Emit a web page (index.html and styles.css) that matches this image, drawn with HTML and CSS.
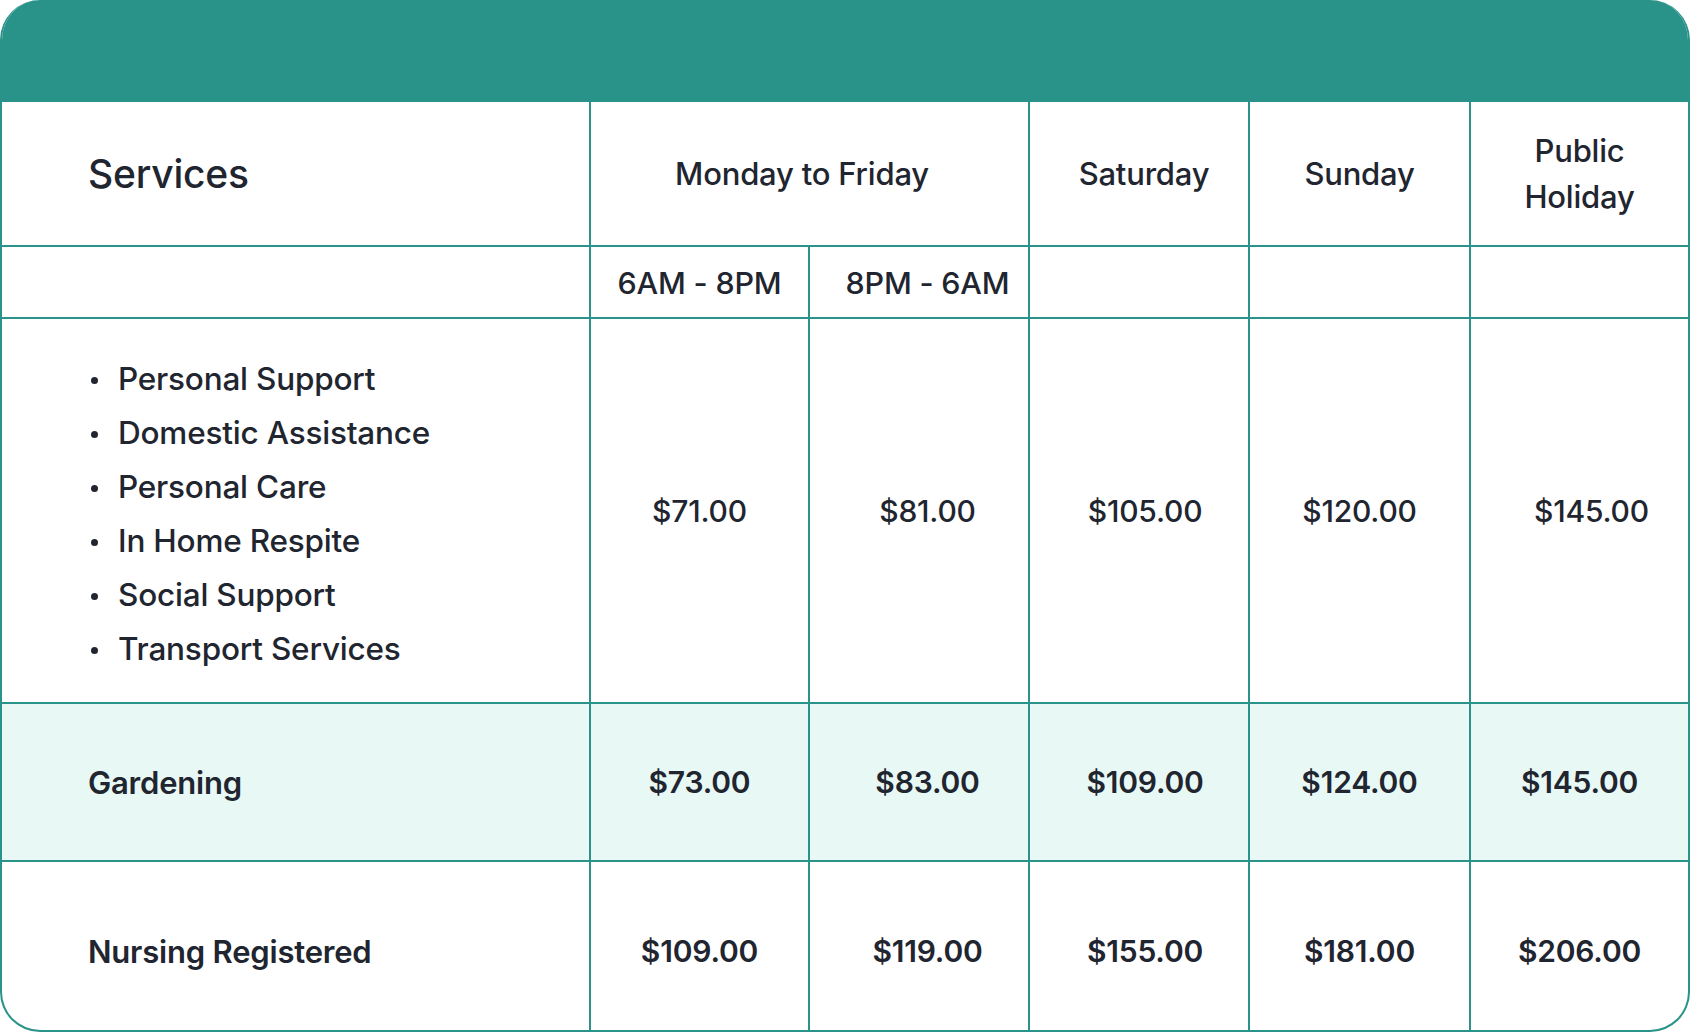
FILE: index.html
```html
<!DOCTYPE html>
<html lang="en">
<head>
<meta charset="utf-8">
<title>Service Rates</title>
<link rel="stylesheet" href="styles.css">
</head>
<body>
<div class="card">
  <div class="card-top"></div>
  <table class="rates">
    <colgroup>
      <col class="c-svc">
      <col class="c-a">
      <col class="c-b">
      <col class="c-c">
      <col class="c-d">
      <col class="c-e">
    </colgroup>
    <thead>
      <tr class="r-head">
        <th class="svc-title">Services</th>
        <th class="h-week" colspan="2">Monday to Friday</th>
        <th class="h-sat">Saturday</th>
        <th>Sunday</th>
        <th class="two-line">Public<br>Holiday</th>
      </tr>
      <tr class="r-times">
        <th></th>
        <th>6AM - 8PM</th>
        <th>8PM - 6AM</th>
        <th></th>
        <th></th>
        <th></th>
      </tr>
    </thead>
    <tbody>
      <tr class="r-list">
        <td class="svc">
          <ul class="svc-list">
            <li>Personal Support</li>
            <li>Domestic Assistance</li>
            <li>Personal Care</li>
            <li>In Home Respite</li>
            <li>Social Support</li>
            <li>Transport Services</li>
          </ul>
        </td>
        <td>$71.00</td>
        <td>$81.00</td>
        <td>$105.00</td>
        <td>$120.00</td>
        <td class="p-hol">$145.00</td>
      </tr>
      <tr class="r-garden">
        <td class="svc bold">Gardening</td>
        <td>$73.00</td>
        <td>$83.00</td>
        <td>$109.00</td>
        <td>$124.00</td>
        <td>$145.00</td>
      </tr>
      <tr class="r-nurse">
        <td class="svc bold">Nursing Registered</td>
        <td>$109.00</td>
        <td>$119.00</td>
        <td>$155.00</td>
        <td>$181.00</td>
        <td>$206.00</td>
      </tr>
    </tbody>
  </table>
</div>
</body>
</html>
```

FILE: styles.css
```css
html, body {
  margin: 0;
  padding: 0;
  background: #ffffff;
}

body {
  font-family: Inter, "Noto Sans", "Liberation Sans", sans-serif;
  color: #21252f;
}

.card {
  width: 1690px;
  height: 1032px;
  box-sizing: border-box;
  border: 2px solid #2a9389;
  border-top: none;
  border-radius: 40px;
  overflow: hidden;
  display: flex;
  flex-direction: column;
  background: #ffffff;
}

.card-top {
  height: 102px;
  flex: none;
  background: #2a9389;
}

.rates {
  width: 100%;
  flex: 1;
  border-collapse: collapse;
  table-layout: fixed;
}

.c-svc { width: 588px; }
.c-a { width: 219px; }
.c-b { width: 220px; }
.c-c { width: 220px; }
.c-d { width: 221px; }
.c-e { width: auto; }

.rates th,
.rates td {
  border: 2px solid #2a9389;
  padding: 0;
  text-align: center;
  vertical-align: middle;
  font-weight: 500;
  letter-spacing: -0.2px;
}

.rates tr > :first-child { border-left: none; }
.rates tr > :last-child { border-right: none; }
.rates thead tr:first-child > * { border-top: none; }
.rates tbody tr:last-child > * { border-bottom: none; }

.r-head { height: 144px; }
.r-head th {
  font-size: 31px;
  line-height: 46px;
}
.r-head .svc-title {
  text-align: left;
  padding-left: 86px;
  font-size: 39px;
}
.r-head .h-week { padding-right: 15px; }
.r-head .h-sat { padding-left: 10px; }

.r-times { height: 72px; }
.r-times th { font-size: 30.5px; }

.r-times th:nth-child(3),
.rates tbody td:nth-child(3) { padding-left: 17px; }
.rates tbody td:nth-child(4) { padding-left: 12px; }
.rates tbody td.p-hol { padding-left: 24px; }

.r-list { height: 385px; }
.r-garden { height: 158px; background: #e8f8f5; }
.r-nurse { height: 169px; }
.r-nurse td { padding-top: 10px; }

.rates td {
  font-size: 30px;
}

.r-garden td,
.r-nurse td {
  font-weight: 600;
}

.rates td.svc {
  text-align: left;
  padding-left: 86px;
  font-size: 31px;
}

.r-list td.svc { padding-top: 6px; }

.svc-list {
  margin: 0;
  padding: 0 0 0 30px;
  list-style: none;
}

.svc-list li {
  position: relative;
  font-size: 31.5px;
  line-height: 54px;
  font-weight: 500;
}

.svc-list li::before {
  content: "";
  position: absolute;
  left: -27px;
  top: 25px;
  width: 7px;
  height: 7px;
  border-radius: 50%;
  background: #21252f;
}
```
